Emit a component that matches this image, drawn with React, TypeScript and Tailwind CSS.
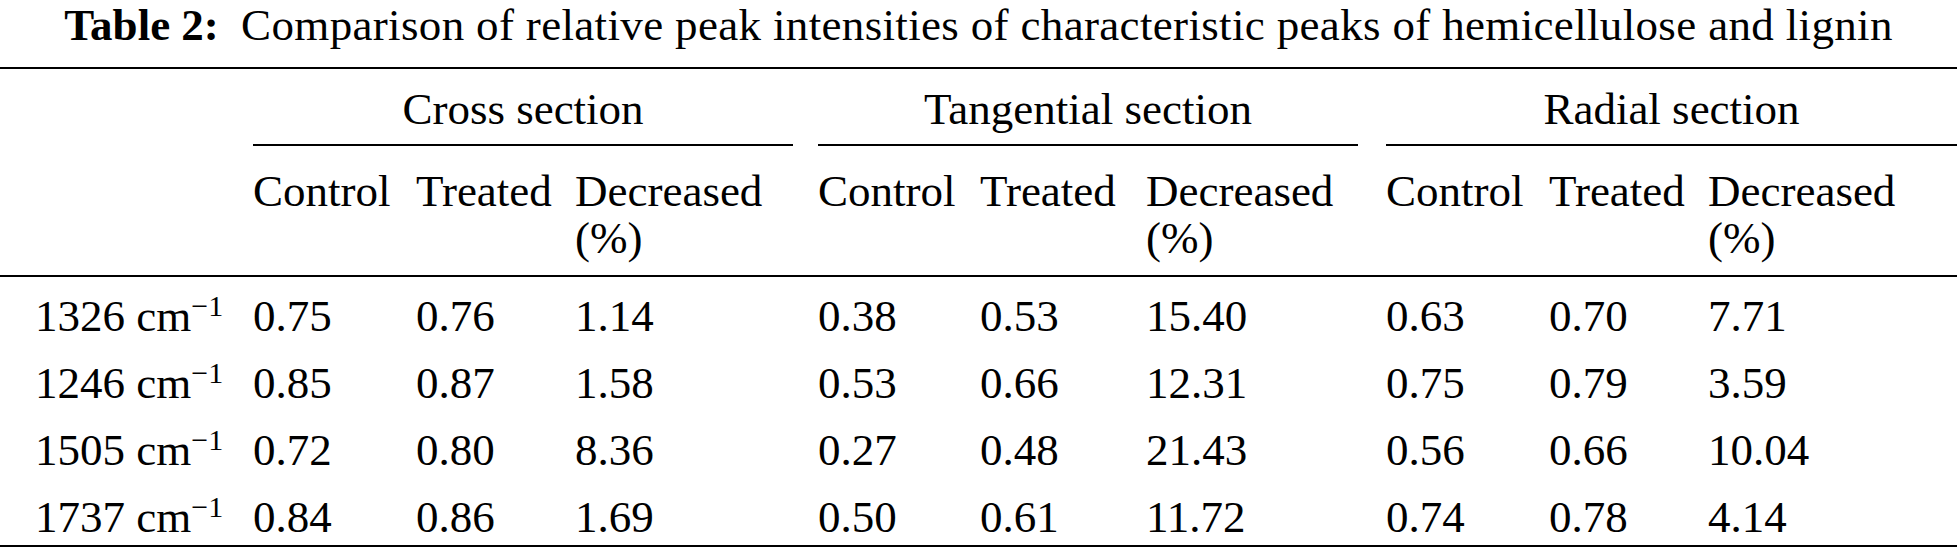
const cols =
  "grid grid-cols-[253px_163px_159px_243px_162px_166px_240px_163px_159px_1fr]";

const groups = [
  { name: "Cross section", pad: "pr-[25px]" },
  { name: "Tangential section", pad: "pr-[28px]" },
  { name: "Radial section", pad: "" },
];

const rows = [
  { peak: "1326", values: ["0.75", "0.76", "1.14", "0.38", "0.53", "15.40", "0.63", "0.70", "7.71"] },
  { peak: "1246", values: ["0.85", "0.87", "1.58", "0.53", "0.66", "12.31", "0.75", "0.79", "3.59"] },
  { peak: "1505", values: ["0.72", "0.80", "8.36", "0.27", "0.48", "21.43", "0.56", "0.66", "10.04"] },
  { peak: "1737", values: ["0.84", "0.86", "1.69", "0.50", "0.61", "11.72", "0.74", "0.78", "4.14"] },
];

// 표 2: 세 단면의 대조군/처리군 상대 피크 강도 비교
export default function App() {
  return (
    <div className="h-[551px] w-[1957px] bg-white font-['Liberation_Serif','Times_New_Roman',serif] text-[45px] text-black">
      <p className="whitespace-nowrap text-center leading-[50px]">
        <span className="mr-[11px] font-bold">Table 2:</span>{" "}
        <span className="tracking-[0.34px]">
          Comparison of relative peak intensities of characteristic peaks of hemicellulose and
          lignin
        </span>
      </p>

      <div className="mt-[17px] border-t-2 border-black">
        <div className={cols}>
          <div />
          {groups.map((g) => (
            <div key={g.name} className={`col-span-3 ${g.pad}`}>
              <div className="border-b-2 border-black pt-[20px] pb-[15px] text-center leading-[40px] whitespace-nowrap">
                {g.name}
              </div>
            </div>
          ))}
        </div>

        <div className={`${cols} border-b-2 border-black pt-[22px] pb-[13px] leading-[47px]`}>
          <div />
          {groups.map((g) => (
            <div key={g.name} className="contents">
              <div>Control</div>
              <div>Treated</div>
              <div>
                Decreased
                <br />
                (%)
              </div>
            </div>
          ))}
        </div>

        <div className="border-b-2 border-black">
          {rows.map((r) => (
            <div key={r.peak} className={`${cols} h-[67px] pt-[19px] leading-[40px]`}>
              <div className="pl-[35px] whitespace-nowrap">
                {r.peak} cm<sup className="text-[30px]">−1</sup>
              </div>
              {r.values.map((v, i) => (
                <div key={i}>{v}</div>
              ))}
            </div>
          ))}
        </div>
      </div>
    </div>
  );
}
